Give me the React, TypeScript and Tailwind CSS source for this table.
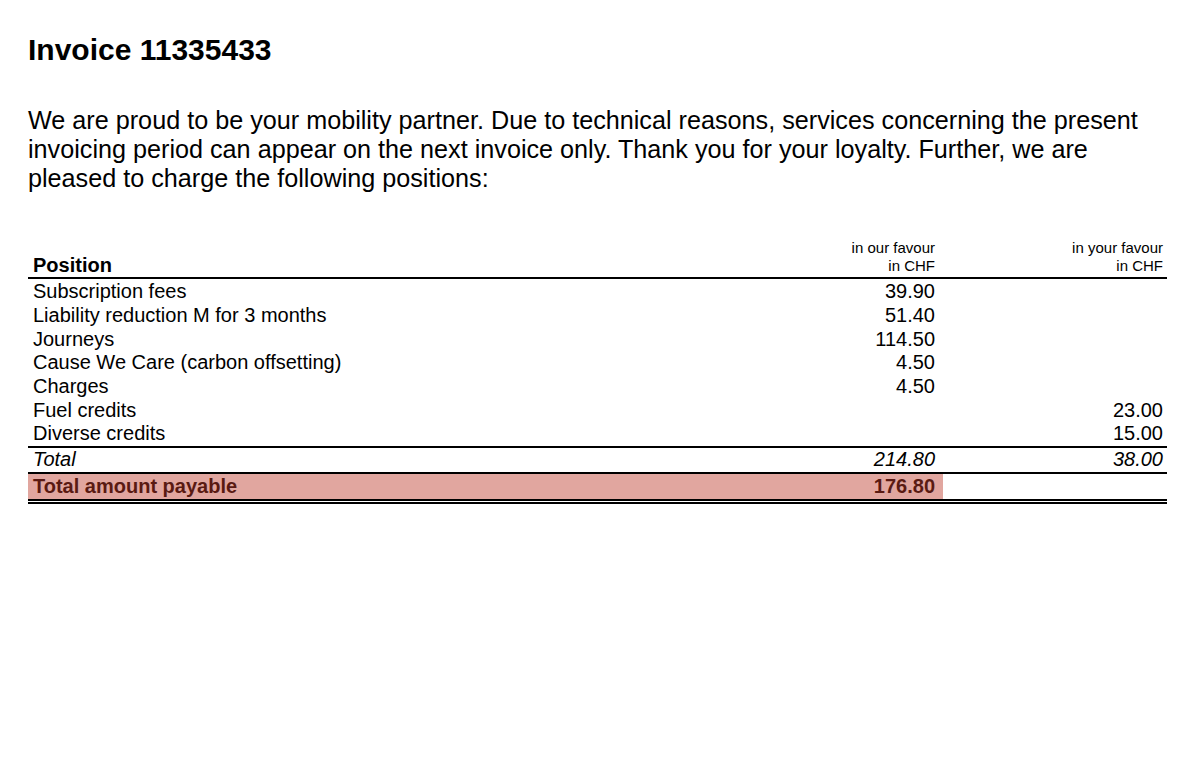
import React from 'react';

type Row = { label: string; ours?: string; yours?: string };

const rows: Row[] = [
  { label: 'Subscription fees', ours: '39.90' },
  { label: 'Liability reduction M for 3 months', ours: '51.40' },
  { label: 'Journeys', ours: '114.50' },
  { label: 'Cause We Care (carbon offsetting)', ours: '4.50' },
  { label: 'Charges', ours: '4.50' },
  { label: 'Fuel credits', yours: '23.00' },
  { label: 'Diverse credits', yours: '15.00' },
];

const grid = 'grid grid-cols-[1fr_160px_224px]';

export default function App() {
  return (
    <div
      className="min-h-[772px] w-[1200px] bg-white px-[28px] pt-[35px] text-black"
      style={{ fontFamily: '"Liberation Sans", Arial, sans-serif' }}
    >
      {/* Titel */}
      <h1 className="text-[30px] font-bold leading-[30px]">Invoice 11335433</h1>

      <p className="mt-[41px] pr-[20px] text-[25.2px] leading-[29px]">
        We are proud to be your mobility partner. Due to technical reasons, services concerning the present
        invoicing period can appear on the next invoice only. Thank you for your loyalty. Further, we are
        pleased to charge the following positions:
      </p>

      {/* Tabelle */}
      <div className="mt-[46px] w-[1139px]">
        <div className={`${grid} items-end border-b-2 border-black pb-[2px]`}>
          <div className="pl-[5px] text-[20px] font-bold leading-[20px]">Position</div>
          <div className="pr-[8px] text-right text-[15px] leading-[18px]">
            in our favour
            <br />
            in CHF
          </div>
          <div className="pr-[4px] text-right text-[15px] leading-[18px]">
            in your favour
            <br />
            in CHF
          </div>
        </div>

        <div className="border-b-2 border-black pt-[1px]">
          {rows.map((r) => (
            <div key={r.label} className={`${grid} h-[23.67px] items-center text-[20px] leading-[23px]`}>
              <div className="pl-[5px]">{r.label}</div>
              <div className="pr-[8px] text-right">{r.ours}</div>
              <div className="pr-[4px] text-right">{r.yours}</div>
            </div>
          ))}
        </div>

        <div className={`${grid} h-[26px] items-center border-b-2 border-black text-[20px] italic leading-[23px]`}>
          <div className="pl-[5px]">Total</div>
          <div className="pr-[8px] text-right">214.80</div>
          <div className="pr-[4px] text-right">38.00</div>
        </div>

        <div className={`${grid} border-b-[5px] border-double border-black text-[20px] font-bold leading-[23px]`}>
          <div className="col-span-2 flex h-[25px] items-center justify-between bg-[#e1a69f] pl-[5px] pr-[8px] text-[#5a1a12]">
            <span>Total amount payable</span>
            <span>176.80</span>
          </div>
          <div />
        </div>
      </div>
    </div>
  );
}
